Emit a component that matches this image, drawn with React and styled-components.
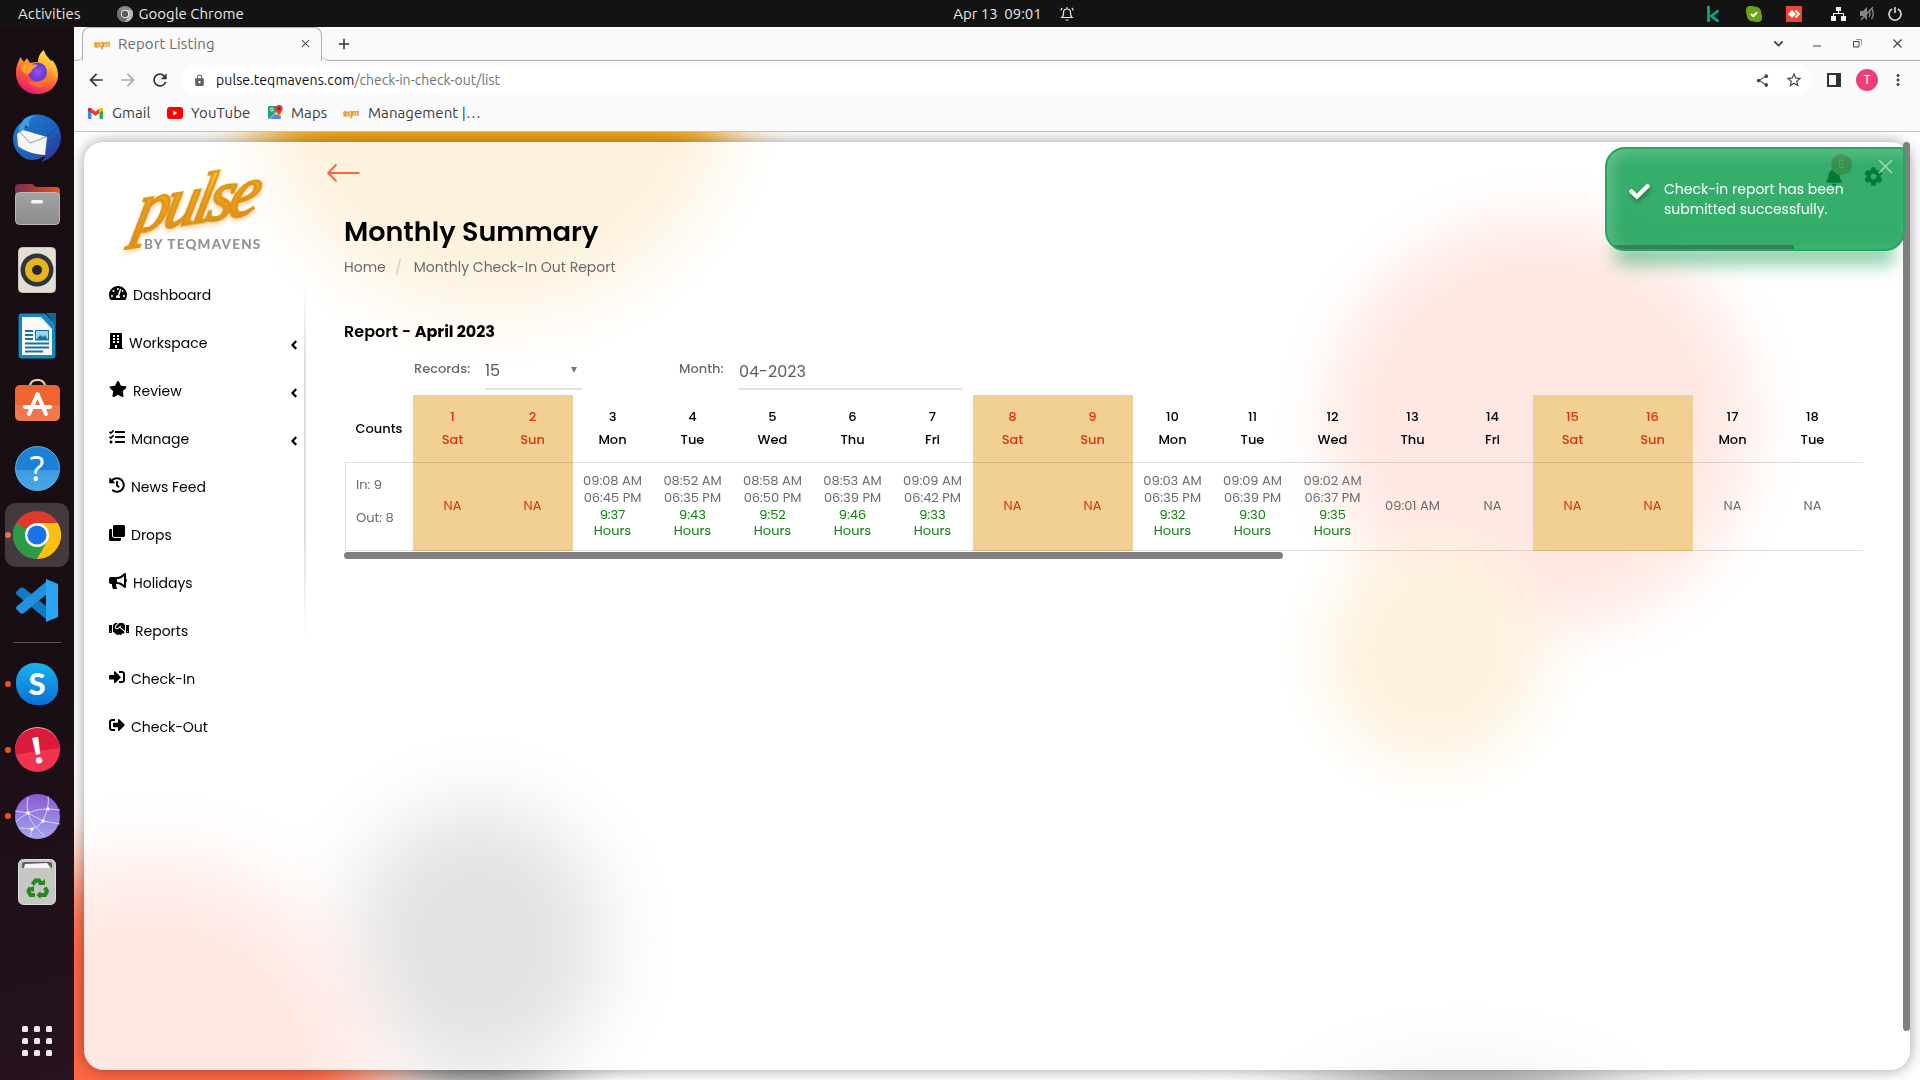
import React from "react";
import styled, { createGlobalStyle, css } from "styled-components";
import {
  FaTachometerAlt, FaBuilding, FaStar, FaTasks, FaHistory, FaClone, FaBullhorn,
  FaHandshake, FaSignInAlt, FaSignOutAlt, FaAngleLeft, FaBell, FaCog, FaCheck,
} from "react-icons/fa";
import {
  MdArrowBack, MdArrowForward, MdRefresh, MdLock, MdShare, MdStarOutline, MdMoreVert,
  MdAdd, MdClose, MdKeyboardArrowDown,
} from "react-icons/md";

const GlobalStyle = createGlobalStyle`
  * { box-sizing: border-box; }
  body { margin: 0; overflow: hidden; background: #131313; }
  svg { display: block; flex: none; }
`;

const system = `Ubuntu, "Noto Sans", sans-serif`;
const poppins = `Poppins, Inter, sans-serif`;

const Desktop = styled.div`
  width: 1920px;
  height: 1080px;
  display: flex;
  flex-direction: column;
  font-family: ${poppins};
`;

/* ---------- top panel ---------- */
const Panel = styled.header`
  height: 27px;
  flex: none;
  display: grid;
  grid-template-columns: 1fr auto 1fr;
  align-items: center;
  background: #131313;
  color: #e8e8e8;
  font: 15px/27px ${system};
`;
const PanelLeft = styled.div`
  display: flex;
  align-items: center;
  padding-left: 18px;
`;
const PanelText = styled.span`
  letter-spacing: ${(p) => p.$ls || 0}px;
  white-space: pre;
`;
const ChromeBadge = styled.span`
  margin: 0 6px 0 36px;
`;
const Clock = styled.div`
  display: flex;
  align-items: center;
  gap: 17px;
  padding-left: 108px;
`;
const Tray = styled.div`
  display: flex;
  justify-content: flex-end;
  padding-right: 3px;
`;
const TraySlot = styled.span`
  width: ${(p) => p.$w}px;
  display: flex;
  justify-content: center;
  align-items: center;
`;

/* ---------- dock ---------- */
const Workarea = styled.div`
  flex: 1;
  min-height: 0;
  display: flex;
`;
const Dock = styled.nav`
  width: 74px;
  flex: none;
  display: flex;
  flex-direction: column;
  align-items: center;
  padding-top: 12px;
  background: linear-gradient(165deg, #190d14 0%, #1a0e15 65%, #26131f 100%);
`;
const DockItem = styled.div`
  width: 74px;
  height: 66.1px;
  display: flex;
  align-items: center;
  padding-left: 5px;
`;
const Dot = styled.i`
  width: 6px;
  height: 6px;
  border-radius: 50%;
  background: ${(p) => (p.$on ? "#e95420" : "transparent")};
`;
const DockTile = styled.span`
  width: 64px;
  height: 64px;
  margin-left: -6px;
  border-radius: 11px;
  display: flex;
  align-items: center;
  justify-content: center;
  background: ${(p) => (p.$active ? "rgba(255,255,255,.18)" : "none")};
`;
const DockRule = styled.hr`
  width: 48px;
  height: 1px;
  margin: 8px 0;
  border: 0;
  background: #5b5257;
`;
const AppGrid = styled.div`
  margin-top: auto;
  margin-bottom: 24px;
  display: grid;
  grid-template-columns: repeat(3, 6px);
  gap: 6px;
`;
const AppDot = styled.i`
  height: 6px;
  border-radius: 1.5px;
  background: #ecebe9;
`;

/* ---------- browser chrome ---------- */
const Browser = styled.div`
  flex: 1;
  min-width: 0;
  display: flex;
  flex-direction: column;
  background: #fafafa;
  font-family: ${system};
  color: #3c3c3c;
`;
const TabStrip = styled.div`
  height: 34px;
  display: flex;
  align-items: stretch;
`;
const StripEdge = styled.div`
  width: 9px;
  border-bottom: 1px solid #b1b1b1;
  border-bottom-right-radius: 7px;
`;
const Tab = styled.div`
  width: 240px;
  margin-left: -1px;
  display: flex;
  align-items: center;
  padding: 0 9px 2px 11px;
  border: 1px solid #b1b1b1;
  border-bottom: 0;
  border-radius: 8px 8px 0 0;
  font-size: 15px;
  color: #6b6b6b;
`;
const TabTitle = styled.span`
  flex: 1;
  margin-left: 7px;
  letter-spacing: 0.15px;
`;
const StripRest = styled.div`
  flex: 1;
  margin-left: -1px;
  display: flex;
  align-items: center;
  justify-content: space-between;
  padding-left: 14px;
  border-bottom: 1px solid #b1b1b1;
  border-bottom-left-radius: 8px;
`;
const WindowButtons = styled.div`
  display: flex;
  padding-right: 3px;
`;
const Slot = styled.span`
  width: ${(p) => p.$w}px;
  display: flex;
  align-items: center;
  justify-content: center;
`;
const Toolbar = styled.div`
  height: 38px;
  display: flex;
  align-items: center;
  padding: 0 2px 0 6px;
`;
const Omnibox = styled.div`
  flex: 1;
  height: 30px;
  margin-left: 5px;
  display: flex;
  align-items: center;
  border-radius: 15px;
  padding: 0 2px 0 12px;
  background: #fff;
  font-size: 14px;
`;
const Url = styled.span`
  flex: 1;
  margin-left: 10px;
  color: #707478;
  letter-spacing: 0.02px;
`;
const Host = styled.span`
  color: #111;
  letter-spacing: 0.1px;
`;
const Avatar = styled.span`
  width: 22px;
  height: 22px;
  border-radius: 50%;
  background: #ec407a;
  color: #fff;
  font: 12px/22px Roboto, sans-serif;
  text-align: center;
`;
const Bookmarks = styled.div`
  height: 33px;
  display: flex;
  align-items: center;
  padding: 0 0 5px 14px;
  border-bottom: 1px solid #c4c4c4;
  font-size: 15px;
`;
const Bookmark = styled.span`
  display: flex;
  align-items: center;
  gap: ${(p) => p.$gap || 8}px;
  width: ${(p) => p.$w}px;
  letter-spacing: 0.07px;
  white-space: nowrap;
`;
const TeqMark = styled.span`
  width: 17px;
  font: italic 700 10px/14px "Liberation Serif", serif;
  letter-spacing: -1.2px;
  color: #e39a1f;
  -webkit-text-stroke: 0.2px #e39a1f;
  transform: rotate(-4deg);
`;

/* ---------- page ---------- */
const Page = styled.div`
  position: relative;
  flex: 1;
  min-height: 0;
  padding: 10px;
  overflow: hidden;
  background: #fff;
  font-family: ${poppins};
`;
const Blob = styled.i`
  position: absolute;
  left: ${(p) => p.$x - 74}px;
  top: ${(p) => p.$y - 132}px;
  width: ${(p) => p.$w}px;
  height: ${(p) => p.$h}px;
  border-radius: 50%;
  background: ${(p) => p.$c};
  filter: blur(${(p) => p.$blur}px);
`;
const Card = styled.div`
  position: relative;
  width: 1826px;
  height: 928px;
  display: flex;
  border-radius: 20px;
  background: rgba(255, 255, 255, 0.85);
  backdrop-filter: blur(14px);
  box-shadow: 0 0 15px rgba(0, 0, 0, 0.38);
`;
const Sidebar = styled.aside`
  width: 222px;
  flex: none;
  padding-left: 25px;
`;
const Logo = styled.div`
  height: 129px;
  padding: 22px 0 0 14px;
`;
const LogoWord = styled.div`
  height: 73px;
  width: 150px;
  padding-left: 12px;
  font: italic 400 68px/70px "Liberation Serif", serif;
  letter-spacing: -4.5px;
  transform: rotate(-9deg) skewX(-22deg);
  transform-origin: 50% 60%;
  white-space: nowrap;
  color: transparent;
  background: linear-gradient(#ffd426 15%, #eda11b 45%, #e08f15 90%);
  background-clip: text;
  -webkit-background-clip: text;
  -webkit-text-stroke: 2.4px #dd9318;
  filter: drop-shadow(1px 3px 2px rgba(240, 160, 60, 0.4));
`;
const LogoTag = styled.div`
  padding-left: 21px;
  font: 900 13.5px/14px Lato, sans-serif;
  letter-spacing: 1.2px;
  color: #929292;
  white-space: nowrap;
`;
const Menu = styled.ul`
  margin: 0;
  padding: 0;
  list-style: none;
`;
const MenuItem = styled.li`
  height: 48px;
  display: flex;
  align-items: center;
  padding-right: 5px;
  font-size: 14px;
  color: #000;
`;
const MenuIcon = styled.span`
  width: ${(p) => p.$w}px;
  height: 16px;
  margin: -4px 6px 0 0;
  svg { width: 100%; height: 100%; }
`;
const MenuLabel = styled.span`
  flex: 1;
`;
const MenuMore = styled.span`
  padding-top: 3px;
`;
const Divider = styled.div`
  width: 2px;
  height: 360px;
  margin: 136px 21px 0 -2px;
  background: linear-gradient(rgba(0,0,0,0), #dcdcdc 25%, #dcdcdc 70%, rgba(0,0,0,0));
`;
const Main = styled.main`
  width: 1536px;
  display: flex;
  flex-direction: column;
  color: #666;
`;
const BackArrow = styled.div`
  height: 62px;
  padding-top: 21px;
`;
const Body = styled.section`
  padding-left: 17px;
`;
const Title = styled.h1`
  margin: 7px 0 0;
  font: 600 27px/42px ${poppins};
  color: #000;
`;
const Crumbs = styled.div`
  display: flex;
  height: 29px;
  align-items: center;
  font-size: 14px;
  color: #6a6a6a;
`;
const CrumbSep = styled.span`
  width: 28px;
  padding-left: 9px;
  font-size: 15px;
  line-height: 20px;
  color: #c9ccd0;
`;
const Subtitle = styled.h2`
  margin: 38px 0 0;
  font: 600 16px/24px ${poppins};
  color: #000;
  b { font-weight: 700; letter-spacing: -0.06px; }
`;
const Filters = styled.div`
  display: flex;
  height: 51px;
  padding: 9px 0 0 70px;
`;
const FilterLabel = styled.label`
  width: ${(p) => p.$w}px;
  font: 500 13px/32px ${poppins};
  color: #6a6a6a;
`;
const Field = styled.div`
  width: ${(p) => p.$w}px;
  height: 37px;
  margin-right: ${(p) => p.$mr || 0}px;
  padding: ${(p) => p.$pt || 0}px 5px 0 0;
  display: flex;
  justify-content: space-between;
  border-bottom: 2px solid #e1e1e1;
  font-size: 16px;
  line-height: 36px;
  color: #5c5c5c;
`;
const Caret = styled.span`
  width: 0;
  height: 0;
  margin-top: 14px;
  border: 3.5px solid transparent;
  border-top: 6px solid #777;
  border-bottom: 0;
`;
const Grid = styled.div`
  display: grid;
  grid-template-columns: 69px repeat(18, 80px) 10px;
  width: 1519px;
`;
const weekend = css`
  background: #f2cf92;
  color: #e03210;
`;
const Head = styled.div`
  height: 68px;
  padding: 11px 1px 0 0;
  border-bottom: 1px solid rgba(0, 0, 0, 0.12);
  text-align: center;
  font: 500 13px/22.5px ${poppins};
  color: #000;
  ${(p) => p.$off && weekend}
`;
const HeadCount = styled(Head)`
  padding: 23px 0 0 1px;
`;
const Cell = styled.div`
  height: 88px;
  border-bottom: 1px solid rgba(0, 0, 0, 0.12);
  display: flex;
  flex-direction: column;
  align-items: center;
  justify-content: center;
  padding-right: 1px;
  font-size: 13px;
  line-height: 16.8px;
  color: #6c6c6c;
  ${(p) => p.$off && weekend}
`;
const CountCell = styled(Cell)`
  align-items: flex-start;
  padding: 0 0 12px 10px;
  border-left: 1px solid #dcdcdc;
  margin-left: 1px;
  line-height: 33px;
`;
const Worked = styled.span`
  color: #0b860b;
  text-align: center;
`;
const HScroll = styled.div`
  width: 939px;
  height: 7px;
  margin-top: 1px;
  border-radius: 4px;
  background: #7f7f7f;
`;
const VScroll = styled.div`
  position: absolute;
  right: 0;
  top: 0;
  width: 7px;
  height: 889px;
  border-radius: 4px;
  background: #7f7f7f;
`;
const HeaderTools = styled.div`
  position: absolute;
  left: 1741px;
  top: 25px;
  display: flex;
  align-items: center;
  gap: 21px;
  color: #000;
`;
const Badge = styled.span`
  position: absolute;
  left: 6px;
  top: -13px;
  width: 21px;
  height: 21px;
  border-radius: 50%;
  background: #ff6f60;
  color: #fff;
  font-size: 11px;
  line-height: 21px;
  text-align: center;
`;
const Toast = styled.div`
  position: absolute;
  left: 1521px;
  top: 5px;
  width: 300px;
  height: 104px;
  padding: 32px 0 0 22px;
  display: flex;
  overflow: hidden;
  border: 2px solid #27a661;
  border-radius: 20px 4px 20px 20px;
  background: rgba(3, 153, 70, 0.8);
  box-shadow: inset 5px 5px 14px rgba(255, 255, 255, 0.22);
  color: #fff;
  font-size: 14px;
  line-height: 20px;
`;
const ToastGlow = styled.div`
  position: absolute;
  left: 1530px;
  top: 90px;
  width: 282px;
  height: 19px;
  border-radius: 20px;
  box-shadow: 0 13px 18px rgba(40, 167, 98, 0.6);
`;
const ToastIcon = styled.span`
  margin: 0 14px 0 0;
  filter: drop-shadow(1px 3px 2px rgba(0, 0, 0, 0.35));
`;
const ToastText = styled.div`
  white-space: pre;
  margin-top: -2px;
`;
const ToastClose = styled.span`
  position: absolute;
  right: 10px;
  top: 10px;
`;
const ToastProgress = styled.i`
  position: absolute;
  left: 7px;
  bottom: 0;
  width: 180px;
  height: 4px;
  background: #3d7e59;
`;

/* ---------- data ---------- */
const menu = [
  { icon: FaTachometerAlt, w: 18, label: "Dashboard" },
  { icon: FaBuilding, w: 14, label: "Workspace", more: true },
  { icon: FaStar, w: 18, label: "Review", more: true },
  { icon: FaTasks, w: 16, label: "Manage", more: true },
  { icon: FaHistory, w: 16, label: "News Feed" },
  { icon: FaClone, w: 16, label: "Drops" },
  { icon: FaBullhorn, w: 18, label: "Holidays" },
  { icon: FaHandshake, w: 20, label: "Reports" },
  { icon: FaSignInAlt, w: 16, label: "Check-In" },
  { icon: FaSignOutAlt, w: 16, label: "Check-Out" },
];
const names = ["Sat", "Sun", "Mon", "Tue", "Wed", "Thu", "Fri"];
const logs = {
  3: ["09:08 AM", "06:45 PM", "9:37"],
  4: ["08:52 AM", "06:35 PM", "9:43"],
  5: ["08:58 AM", "06:50 PM", "9:52"],
  6: ["08:53 AM", "06:39 PM", "9:46"],
  7: ["09:09 AM", "06:42 PM", "9:33"],
  10: ["09:03 AM", "06:35 PM", "9:32"],
  11: ["09:09 AM", "06:39 PM", "9:30"],
  12: ["09:02 AM", "06:37 PM", "9:35"],
  13: ["09:01 AM"],
};
const days = Array.from({ length: 18 }, (_, i) => ({
  n: i + 1,
  name: names[i % 7],
  off: i % 7 < 2,
  log: logs[i + 1],
}));

/* ---------- dock icons ---------- */
const Firefox = () => (
  <svg width="44" height="46" viewBox="0 0 44 46">
    <defs>
      <linearGradient id="ff1" x1=".8" y1="0" x2=".3" y2="1">
        <stop offset="0" stopColor="#fff04a" /><stop offset=".35" stopColor="#ffb02e" />
        <stop offset=".65" stopColor="#ff5a36" /><stop offset="1" stopColor="#e5127d" />
      </linearGradient>
      <radialGradient id="ff2"><stop offset="0" stopColor="#a04bf5" /><stop offset="1" stopColor="#5a3bd0" /></radialGradient>
    </defs>
    <path d="M1 24C1 15 4 13 5 8l4 5 3-4 3 5c4-1 7-1 8-1 0-6 3-10 6-12 1 5 4 7 7 11l1-1c4 4 6 10 6 15 0 11-9 19-21 19S1 36 1 24z" fill="url(#ff1)" />
    <circle cx="22.5" cy="23" r="9.5" fill="url(#ff2)" />
    <path d="M6 17c3-3 7-3 9-2 3 1 7 0 7 1 0 2-4 3-5 5-1 3-3 3-4 5-4-2-7-4-7-9z" fill="#ff9a28" />
    <path d="M27 31c5-1 8-5 8-11 4 8 1 17-8 18-6 1-11-1-14-6 5 2 10 1 14-1z" fill="#ff7a2d" opacity=".7" />
  </svg>
);
const Thunderbird = () => (
  <svg width="48" height="48" viewBox="0 0 48 48">
    <defs><linearGradient id="tb" x1="0" y1="0" x2="1" y2="1"><stop offset="0" stopColor="#1c7fd6" /><stop offset=".6" stopColor="#1f5fb8" /><stop offset="1" stopColor="#38258f" /></linearGradient></defs>
    <path d="M19 1c15-3 29 8 29 22 0 12-9 22-20 25 2-2 4-4 4-6-6 4-13 5-19 3C5 41 0 33 0 25 0 18 4 11 9 8c2-4 6-6 10-7z" fill="url(#tb)" />
    <path d="M4 20l6-4 24 7-2 18C24 41 10 37 5 32z" fill="#f7f7f7" />
    <path d="M6 17l11 12 16-6" fill="none" stroke="#999" />
    <path d="M9 8C12 3 18 1 23 2c-6 1-8 5-7 10l-10 6c-1-3 1-7 3-10z" fill="#3aa0e8" />
    <path d="M33 22c6-3 9-6 11-9M34 28c6-2 10-5 12-8M34 34c6-2 9-4 12-7" stroke="#174b9a" fill="none" />
    <circle cx="13" cy="13" r="1.3" fill="#4a3520" />
  </svg>
);
const Files = () => (
  <svg width="45" height="41" viewBox="0 0 45 41">
    <defs>
      <linearGradient id="fi1"><stop offset="0" stopColor="#7c2b50" /><stop offset="1" stopColor="#e9541f" /></linearGradient>
      <linearGradient id="fi2" x1="0" y1="0" x2="0" y2="1"><stop offset="0" stopColor="#a3a3a3" /><stop offset="1" stopColor="#8c8c8c" /></linearGradient>
    </defs>
    <path d="M4 0h13l4 3h20q4 0 4 4v14H0V4q0-4 4-4z" fill="url(#fi1)" />
    <rect x=".5" y="8.500" width="44" height="32" rx="4" fill="url(#fi2)" stroke="#b8b8b8" />
    <rect x="16" y="16" width="12" height="3.500" rx="1.500" fill="#f4f4f4" />
  </svg>
);
const Speaker = () => (
  <svg width="38" height="46" viewBox="0 0 38 46">
    <rect x=".5" y=".5" width="37" height="45" rx="4" fill="#e3dfd3" stroke="#c9c4b5" />
    <circle cx="19" cy="23" r="16.500" fill="#2e3540" />
    <circle cx="19" cy="23" r="12" fill="#e8b41e" />
    <circle cx="19" cy="23" r="5" fill="#26272b" />
  </svg>
);
const Writer = () => (
  <svg width="38" height="46" viewBox="0 0 38 46">
    <path d="M3 .5h24l10.500 11V42q0 3.500-3 3.500H4Q.5 45.500.5 42V4Q.5.500 3 .5z" fill="#1787be" />
    <path d="M28 0h10v13z" fill="#0d6a9c" />
    <path d="M4 4h19l11 12v26H4z" fill="#fafafa" />
    <path d="M7 18h8M7 22h8M7 26h8M7 30.500h24M7 34.500h24M7 38.500h18" stroke="#14739f" strokeWidth="2" />
    <rect x="17.500" y="17.500" width="13" height="9.500" fill="#9bd3ee" stroke="#14739f" />
    <path d="M18 27l4-5 3 2 2-2 3 5z" fill="#14739f" />
  </svg>
);
const Software = () => (
  <svg width="45" height="47" viewBox="0 0 45 47">
    <path d="M15 8q0-7 7.500-7T30 8" fill="none" stroke="#f3cf9e" strokeWidth="2.200" />
    <rect y="6" width="45" height="36" rx="5" fill="#ef6430" />
    <path d="M0 26h45v11q0 5-5 5H5q-5 0-5-5z" fill="#fff" opacity=".13" />
    <path d="M14 35l8.500-20L31 35M10 28h25" stroke="#fff" strokeWidth="4" fill="none" strokeLinecap="round" strokeLinejoin="round" />
  </svg>
);
const HelpBall = styled.span`
  width: 45px;
  height: 45px;
  border-radius: 50%;
  border: 1px solid #62b5ea;
  background: linear-gradient(#1d80d8 54%, #3b9ce3 54%, #49a6e6);
  color: #fff;
  font: 34px/42px "Noto Sans", sans-serif;
  text-align: center;
`;
const ChromeIcon = ({ size = 48, mono }) => {
  const c = mono ? ["#8b8b8b", "#6d6d6d", "#b8b8b8", "#5d5d5d"] : ["#dd3a2d", "#2c9b48", "#fbc112", "#1a73e8"];
  return (
    <svg width={size} height={size} viewBox="0 0 48 48">
      <circle cx="24" cy="24" r="24" fill={c[0]} />
      <path d="M3.200 12A24 24 0 0 0 24 48l10.400-18z" fill={c[1]} />
      <path d="M24 48A24 24 0 0 0 44.800 12H24l10.400 18z" fill={c[2]} />
      <circle cx="24" cy="24" r="12" fill="#fff" />
      <circle cx="24" cy="24" r="9.600" fill={c[3]} />
    </svg>
  );
};
const Code = () => (
  <svg width="42" height="43" viewBox="0 0 42 43">
    <path d="M1 16q-2-2 0-4l3-3q2-1 4 0l23 19v13z" fill="#0f7bc4" />
    <path d="M1 27q-2 2 0 4l3 3q2 1 4 0l23-19V2z" fill="#2190dd" />
    <path d="M30 0l12 5v33l-12 5z" fill="#2aa5f2" />
  </svg>
);
const SkypeBall = styled.span`
  width: 42px;
  height: 42px;
  background: linear-gradient(#18b4ec, #0a6fd8);
  border-radius: 44% 50% 40% 50%;
  color: #fff;
  font: 900 31px/41px Lato, sans-serif;
  text-align: center;
`;
const AlertBall = styled.span`
  width: 45px;
  height: 45px;
  border-radius: 50%;
  background: linear-gradient(172deg, #dc1a3c 52%, #f03450 53%);
  color: #fff;
  font: 700 36px/43px "Open Sans", sans-serif;
  text-align: center;
  border-top: 1px solid #f5aab6;
`;
const AlertMark = styled.span`
  display: inline-block;
  transform: rotate(-10deg);
`;
const Globe = () => (
  <svg width="45" height="45" viewBox="0 0 45 45">
    <defs><linearGradient id="gl" x1="0" y1="0" x2="0" y2="1"><stop offset="0" stopColor="#8a5ad6" /><stop offset="1" stopColor="#a3a6ee" /></linearGradient></defs>
    <circle cx="22.500" cy="22.500" r="22.500" fill="url(#gl)" />
    <g fill="none" stroke="#d9d0f7" strokeWidth="1"><path d="M13 3q-2 8 0 16 3 12 17 23M0 17l13 2 15 8 17 3M33 2q2 9-5 25-5 6-11 8L4 34M13 19q12-6 32-3M13 19Q3 25 1 28M17 35l-2 8" /></g>
    <g fill="#fff"><circle cx="13" cy="19" r="1.800" /><circle cx="33" cy="15" r="1.800" /><circle cx="28" cy="27" r="1.800" /><circle cx="17" cy="35" r="1.800" /></g>
  </svg>
);
const Trash = () => (
  <svg width="38" height="46" viewBox="0 0 38 46">
    <rect x=".5" y=".5" width="37" height="45" rx="5" fill="#c6c6c4" stroke="#dededc" />
    <path d="M4 9V5q0-2 3-2h24q3 0 3 2v4z" fill="#5d5d5d" />
    <path d="M6 9l1-4 22-1 4 5z" fill="#f5f5f5" />
    <g fill="none" stroke="#26871f" strokeWidth="4">
      <path d="M14.500 25.500l3-4h3.500l2.500 4" /><path d="M27 28.500l2 4-2 3.500h-5" /><path d="M17 36h-4.500l-2-3.500 2-4" />
    </g>
    <path d="M20 26h7V20zM22.500 32v8l-4-4zM9 30l7-3v6z" fill="#26871f" />
  </svg>
);
const dockTop = [
  [Firefox], [Thunderbird], [Files], [Speaker], [Writer], [Software],
  [() => <HelpBall>?</HelpBall>], [ChromeIcon, true, true], [Code],
];
const dockBottom = [
  [() => <SkypeBall>S</SkypeBall>, true],
  [() => <AlertBall><AlertMark>!</AlertMark></AlertBall>, true],
  [Globe, true], [Trash],
];
const renderDock = ([Icon, on, active], i) => (
  <DockItem key={i}>
    <Dot $on={on} />
    <DockTile $active={active}><Icon /></DockTile>
  </DockItem>
);

/* ---------- small icons ---------- */
const Gmail = () => (
  <svg width="15" height="12" viewBox="0 0 15 12">
    <path d="M0 2v9q0 1 1 1h2.500V5z" fill="#4285f4" /><path d="M15 2v9q0 1-1 1h-2.500V5z" fill="#34a853" />
    <path d="M3.500 6V1.500L7.500 4.500l4-3V6l-4 3z" fill="#ea4335" /><path d="M0 2.500Q0-.5 3.500 1.500V6L0 3.500z" fill="#c5221f" />
    <path d="M15 2.500Q15-.5 11.500 1.500V6L15 3.500z" fill="#fbbc04" />
  </svg>
);
const YouTube = () => (
  <svg width="16" height="12" viewBox="0 0 16 12"><rect width="16" height="12" rx="3" fill="#f00" /><path d="M6.300 3.500v5l4-2.500z" fill="#fff" /></svg>
);
const Maps = () => (
  <svg width="15" height="15" viewBox="0 0 15 15">
    <rect y="1" width="13" height="13" rx="1.500" fill="#4a8af4" /><path d="M0 2.500Q0 1 1.500 1H11L1 13q-1 0-1-2z" fill="#1fa463" />
    <path d="M13 7v5L8 7.500zM1 14L9.500 5.500l2 2L4 14z" fill="#f5d04c" /><path d="M2 14l5-5 5 5z" fill="#4a8af4" />
    <path d="M11 0a3.600 3.600 0 0 1 3.600 3.600Q14.600 6 11 10 7.500 6 7.500 3.600A3.600 3.600 0 0 1 11 0z" fill="#e2382b" /><circle cx="11" cy="3.600" r="1.300" fill="#8c1c15" />
    <circle cx="3.800" cy="4.500" r="1.500" fill="none" stroke="#fff" />
  </svg>
);

function TopPanel() {
  return (
    <Panel>
      <PanelLeft>
        <PanelText $ls={0.1}>Activities</PanelText>
        <ChromeBadge><ChromeIcon size={16} mono /></ChromeBadge>
        <PanelText>Google Chrome</PanelText>
      </PanelLeft>
      <Clock>
        <PanelText $ls={-0.05}>Apr 13  09:01</PanelText>
        <svg width="16" height="16" viewBox="0 0 16 16" fill="none" stroke="#e8e8e8" strokeWidth="1.200">
          <path d="M3 11.500q1.500-1 1.500-5a3.500 3.500 0 0 1 7 0q0 4 1.500 5zM6.500 14h3M8 3V1M2 4.500q0-1.500 1.200-2.500M14 4.500Q14 3 12.800 2" />
        </svg>
      </Clock>
      <Tray>
        <TraySlot $w={42}>
          <svg width="13" height="16" viewBox="0 0 13 16" fill="none" stroke="#0ca58c" strokeWidth="2.800"><path d="M1.500 0v16M11.500 4.500L4.500 10l7 5.500" /></svg>
        </TraySlot>
        <TraySlot $w={40}>
          <svg width="16" height="16" viewBox="0 0 16 16"><path d="M1 1Q4-1 8 .5 15 0 15.500 8q1.500 4-.5 7-3 2-7 .5Q1 16 .5 8-1 4 1 1z" fill="#68a516" /><path d="M5 8l2.300 2.200L11 6.300" stroke="#fff" strokeWidth="2" fill="none" /></svg>
        </TraySlot>
        <TraySlot $w={40}>
          <svg width="16" height="16" viewBox="0 0 16 16"><path fill="#ef443b" d="M0 0h16v16H0z" /><path d="M6 4l4 4-4 4-4-4z" fill="#fff" /><path d="M9.500 4.500L13 8l-3.500 3.500" stroke="#fff" strokeWidth="1.800" fill="none" /></svg>
        </TraySlot>
        <TraySlot $w={48}>
          <svg width="15" height="14" viewBox="0 0 15 14" fill="#f2f2f2"><path d="M5 0h5v4H8v2h5v3h2v5h-5V9h2V7H3v2h2v5H0V9h2V6h5V4H5z" /></svg>
        </TraySlot>
        <TraySlot $w={10}>
          <svg width="15" height="15" viewBox="0 0 15 15"><path d="M0 5h3l4-4v13l-4-4H0z" fill="#858585" /><path d="M9 4q2 3.500 0 7M11.500 2q3.500 5.500 0 11M1 14L13 1" stroke="#858585" strokeWidth="1.400" fill="none" /></svg>
        </TraySlot>
        <TraySlot $w={45}>
          <svg width="14" height="14" viewBox="0 0 14 14" fill="none" stroke="#e8e8e8" strokeWidth="1.500"><path d="M4 2a6 6 0 1 0 6 0M7 0v6" /></svg>
        </TraySlot>
      </Tray>
    </Panel>
  );
}

function BrowserChrome() {
  return (
    <>
      <TabStrip>
        <StripEdge />
        <Tab>
          <TeqMark>teqm</TeqMark>
          <TabTitle>Report Listing</TabTitle>
          <MdClose size={13} color="#555" />
        </Tab>
        <StripRest>
          <MdAdd size={18} color="#333" />
          <WindowButtons>
            <Slot $w={38}><MdKeyboardArrowDown size={19} color="#333" /></Slot>
            <Slot $w={40}><svg width="8" height="6"><path d="M0 5h8" stroke="#444" /></svg></Slot>
            <Slot $w={40}><svg width="9" height="9" fill="none" stroke="#444"><path d="M.5 2.500h5.500v5.500H.5z" strokeWidth="1" /><path d="M3 .5h5.500V6" stroke="#999" /></svg></Slot>
            <Slot $w={40}><svg width="9" height="9"><path d="M.5.5l8 8M8.500.5l-8 8" stroke="#444" strokeWidth="1.200" /></svg></Slot>
          </WindowButtons>
        </StripRest>
      </TabStrip>
      <Toolbar>
        <Slot $w={32}><MdArrowBack size={20} color="#333" /></Slot>
        <Slot $w={32}><MdArrowForward size={20} color="#aaa" /></Slot>
        <Slot $w={32}><MdRefresh size={20} color="#333" /></Slot>
        <Omnibox>
          <MdLock size={13} color="#5f6368" />
          <Url><Host>pulse.teqmavens.com</Host>/check-in-check-out/list</Url>
          <Slot $w={32}><MdShare size={15} color="#444" /></Slot>
          <Slot $w={32}><MdStarOutline size={18} color="#444" /></Slot>
        </Omnibox>
        <Slot $w={44}><svg width="14" height="14"><path d="M1 1h12v12H1z" fill="none" stroke="#333" strokeWidth="2" /><path d="M9 1h4v12H9z" fill="#333" /></svg></Slot>
        <Slot $w={22}><Avatar>T</Avatar></Slot>
        <Slot $w={40}><MdMoreVert size={18} color="#444" /></Slot>
      </Toolbar>
      <Bookmarks>
        <Bookmark $w={79} $gap={9}><Gmail />Gmail</Bookmark>
        <Bookmark $w={101}><YouTube />YouTube</Bookmark>
        <Bookmark $w={75} $gap={8}><Maps />Maps</Bookmark>
        <Bookmark $w={160}><TeqMark>teqm</TeqMark>Management |…</Bookmark>
      </Bookmarks>
    </>
  );
}

function MonthGrid() {
  return (
    <Grid>
      <HeadCount>Counts</HeadCount>
      {days.map((d) => (
        <Head key={d.n} $off={d.off}>{d.n}<br />{d.name}</Head>
      ))}
      <Head />
      <CountCell><span>In: 9</span><span>Out: 8</span></CountCell>
      {days.map((d) => (
        <Cell key={d.n} $off={d.off}>
          {d.log ? d.log.slice(0, 2).map((t) => <span key={t}>{t}</span>) : "NA"}
          {d.log && d.log[2] && <Worked>{d.log[2]}<br />Hours</Worked>}
        </Cell>
      ))}
      <Cell />
    </Grid>
  );
}

export default function App() {
  return (
    <Desktop>
      <GlobalStyle />
      <TopPanel />
      <Workarea>
        <Dock>
          {dockTop.map(renderDock)}
          <DockRule />
          {dockBottom.map(renderDock)}
          <AppGrid>{Array.from({ length: 9 }, (_, i) => <AppDot key={i} />)}</AppGrid>
        </Dock>
        <Browser>
          <BrowserChrome />
          <Page>
            <Blob $x={255} $y={-160} $w={480} $h={475} $c="#f0a41c" $blur={32} />
            <Blob $x={1325} $y={216} $w={430} $h={415} $c="#ff6742" $blur={25} />
            <Blob $x={1322} $y={540} $w={222} $h={226} $c="#f3a724" $blur={25} />
            <Blob $x={350} $y={805} $w={255} $h={275} $c="#404040" $blur={38} />
            <Blob $x={-80} $y={858} $w={460} $h={480} $c="#ff6742" $blur={38} />
            <Blob $x={1250} $y={1085} $w={430} $h={300} $c="#555" $blur={45} />
            <Card>
              <Sidebar>
                <Logo>
                  <LogoWord>pulse</LogoWord>
                  <LogoTag>BY TEQMAVENS</LogoTag>
                </Logo>
                <Menu>
                  {menu.map(({ icon: Icon, w, label, more }) => (
                    <MenuItem key={label}>
                      <MenuIcon $w={w}><Icon /></MenuIcon>
                      <MenuLabel>{label}</MenuLabel>
                      {more && <MenuMore><FaAngleLeft size={14} /></MenuMore>}
                    </MenuItem>
                  ))}
                </Menu>
              </Sidebar>
              <Divider />
              <Main>
                <BackArrow>
                  <svg width="33" height="20" viewBox="0 0 33 20" fill="none" stroke="#ff6347" strokeWidth="1.900"><path d="M1 10h31.500M9.500 1.500L1.200 10l8.300 8.500" /></svg>
                </BackArrow>
                <Body>
                  <Title>Monthly Summary</Title>
                  <Crumbs><span>Home</span><CrumbSep>/</CrumbSep><span>Monthly Check-In Out Report</span></Crumbs>
                  <Subtitle>Report - <b>April 2023</b></Subtitle>
                  <Filters>
                    <FilterLabel $w={71}>Records:</FilterLabel>
                    <Field $w={97} $mr={97}>15<Caret /></Field>
                    <FilterLabel $w={60}>Month:</FilterLabel>
                    <Field $w={223} $pt={1}>04-2023</Field>
                  </Filters>
                  <MonthGrid />
                  <HScroll />
                </Body>
              </Main>
              <HeaderTools>
                <FaBell size={18} /><Badge>5</Badge><FaCog size={19} />
              </HeaderTools>
              <VScroll />
              <ToastGlow />
              <Toast>
                <ToastIcon><FaCheck size={21} /></ToastIcon>
                <ToastText>{"Check-in report has been\nsubmitted successfully."}</ToastText>
                <ToastClose><svg width="15" height="15"><path d="M1 1l13 13M14 1L1 14" stroke="#9bd8b6" strokeWidth="1.700" /></svg></ToastClose>
                <ToastProgress />
              </Toast>
            </Card>
          </Page>
        </Browser>
      </Workarea>
    </Desktop>
  );
}
